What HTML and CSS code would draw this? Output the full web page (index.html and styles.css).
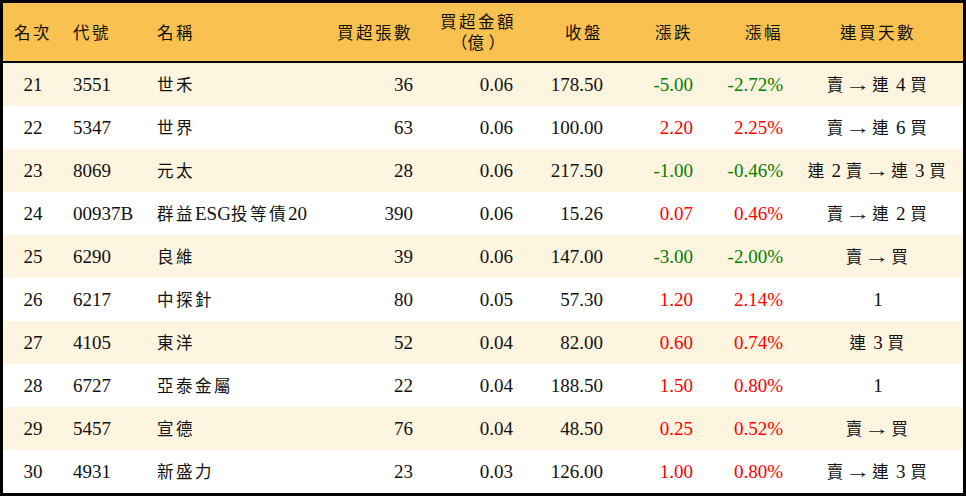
FILE: index.html
```html
<!DOCTYPE html>
<html lang="zh-Hant">
<head>
<meta charset="utf-8">
<title>買超排行</title>
<link rel="stylesheet" href="styles.css">
</head>
<body>
<div class="board">
  <div class="row head">
    <div class="cell center"><span class="c">名次</span></div>
    <div class="cell left"><span class="c">代號</span></div>
    <div class="cell left"><span class="c">名稱</span></div>
    <div class="cell right"><span class="c">買超張數</span></div>
    <div class="cell right two"><span class="c line">買超金額</span><span class="c line"><span class="po">（</span>億<span class="pc">）</span></span></div>
    <div class="cell right"><span class="c">收盤</span></div>
    <div class="cell right"><span class="c">漲跌</span></div>
    <div class="cell right"><span class="c">漲幅</span></div>
    <div class="cell center"><span class="c">連買天數</span></div>
  </div>

  <div class="row alt">
    <div class="cell center">21</div><div class="cell left">3551</div><div class="cell left"><span class="c">世禾</span></div>
    <div class="cell right">36</div><div class="cell right">0.06</div><div class="cell right">178.50</div>
    <div class="cell right down">-5.00</div><div class="cell right down">-2.72%</div>
    <div class="cell center"><span class="c">賣</span> <span class="ar">→</span> <span class="c">連</span> 4 <span class="c">買</span></div>
  </div>
  <div class="row">
    <div class="cell center">22</div><div class="cell left">5347</div><div class="cell left"><span class="c">世界</span></div>
    <div class="cell right">63</div><div class="cell right">0.06</div><div class="cell right">100.00</div>
    <div class="cell right up">2.20</div><div class="cell right up">2.25%</div>
    <div class="cell center"><span class="c">賣</span> <span class="ar">→</span> <span class="c">連</span> 6 <span class="c">買</span></div>
  </div>
  <div class="row alt">
    <div class="cell center">23</div><div class="cell left">8069</div><div class="cell left"><span class="c">元太</span></div>
    <div class="cell right">28</div><div class="cell right">0.06</div><div class="cell right">217.50</div>
    <div class="cell right down">-1.00</div><div class="cell right down">-0.46%</div>
    <div class="cell center"><span class="c">連</span> 2 <span class="c">賣</span> <span class="ar">→</span> <span class="c">連</span> 3 <span class="c">買</span></div>
  </div>
  <div class="row">
    <div class="cell center">24</div><div class="cell left">00937B</div><div class="cell left"><span class="c">群益</span>ESG<span class="c">投等債</span>20</div>
    <div class="cell right">390</div><div class="cell right">0.06</div><div class="cell right">15.26</div>
    <div class="cell right up">0.07</div><div class="cell right up">0.46%</div>
    <div class="cell center"><span class="c">賣</span> <span class="ar">→</span> <span class="c">連</span> 2 <span class="c">買</span></div>
  </div>
  <div class="row alt">
    <div class="cell center">25</div><div class="cell left">6290</div><div class="cell left"><span class="c">良維</span></div>
    <div class="cell right">39</div><div class="cell right">0.06</div><div class="cell right">147.00</div>
    <div class="cell right down">-3.00</div><div class="cell right down">-2.00%</div>
    <div class="cell center"><span class="c">賣</span> <span class="ar">→</span> <span class="c">買</span></div>
  </div>
  <div class="row">
    <div class="cell center">26</div><div class="cell left">6217</div><div class="cell left"><span class="c">中探針</span></div>
    <div class="cell right">80</div><div class="cell right">0.05</div><div class="cell right">57.30</div>
    <div class="cell right up">1.20</div><div class="cell right up">2.14%</div>
    <div class="cell center">1</div>
  </div>
  <div class="row alt">
    <div class="cell center">27</div><div class="cell left">4105</div><div class="cell left"><span class="c">東洋</span></div>
    <div class="cell right">52</div><div class="cell right">0.04</div><div class="cell right">82.00</div>
    <div class="cell right up">0.60</div><div class="cell right up">0.74%</div>
    <div class="cell center"><span class="c">連</span> 3 <span class="c">買</span></div>
  </div>
  <div class="row">
    <div class="cell center">28</div><div class="cell left">6727</div><div class="cell left"><span class="c">亞泰金屬</span></div>
    <div class="cell right">22</div><div class="cell right">0.04</div><div class="cell right">188.50</div>
    <div class="cell right up">1.50</div><div class="cell right up">0.80%</div>
    <div class="cell center">1</div>
  </div>
  <div class="row alt">
    <div class="cell center">29</div><div class="cell left">5457</div><div class="cell left"><span class="c">宣德</span></div>
    <div class="cell right">76</div><div class="cell right">0.04</div><div class="cell right">48.50</div>
    <div class="cell right up">0.25</div><div class="cell right up">0.52%</div>
    <div class="cell center"><span class="c">賣</span> <span class="ar">→</span> <span class="c">買</span></div>
  </div>
  <div class="row">
    <div class="cell center">30</div><div class="cell left">4931</div><div class="cell left"><span class="c">新盛力</span></div>
    <div class="cell right">23</div><div class="cell right">0.03</div><div class="cell right">126.00</div>
    <div class="cell right up">1.00</div><div class="cell right up">0.80%</div>
    <div class="cell center"><span class="c">賣</span> <span class="ar">→</span> <span class="c">連</span> 3 <span class="c">買</span></div>
  </div>
</div>
</body>
</html>
```

FILE: styles.css
```css
html, body {
  margin: 0;
  padding: 0;
  background: #ffffff;
}

.board {
  width: 966px;
  height: 496px;
  box-sizing: border-box;
  border: 3px solid #000;
  font-family: "Liberation Serif", "Noto Sans CJK TC", serif;
  font-size: 19px;
  color: #111;
  background: #ffffff;
}

.row {
  display: grid;
  grid-template-columns: 60px 84px 176px 100px 100px 90px 90px 90px 170px;
  height: 43px;
  align-items: center;
}

.row.alt {
  background: #fef5e0;
}

.row.head {
  height: 58px;
  background: #f9c150;
  border-bottom: 2px solid #000;
}

.cell {
  white-space: nowrap;
  line-height: 22px;
}

.left {
  text-align: left;
  padding-left: 10px;
}

.right {
  text-align: right;
  padding-right: 10px;
}

.center {
  text-align: center;
}

.c {
  font-family: "Noto Sans CJK TC", sans-serif;
  font-size: 16.5px;
  letter-spacing: 2.5px;
}

.ar {
  display: inline-block;
  width: 17px;
  text-align: center;
  font-family: "Liberation Serif", serif;
  font-size: 19px;
  transform: translateX(-3px) scaleX(1.35);
}

.two {
  display: flex;
  flex-direction: column;
  align-items: center;
  padding-right: 0;
  padding-left: 10px;
}

.line {
  display: block;
  line-height: 21px;
}

.po,
.pc {
  display: inline-block;
  width: 17px;
  letter-spacing: 0;
}

.po {
  text-align: right;
}

.pc {
  text-align: left;
  margin-left: 2px;
}

.up {
  color: #ff0000;
}

.down {
  color: #008000;
}
```
